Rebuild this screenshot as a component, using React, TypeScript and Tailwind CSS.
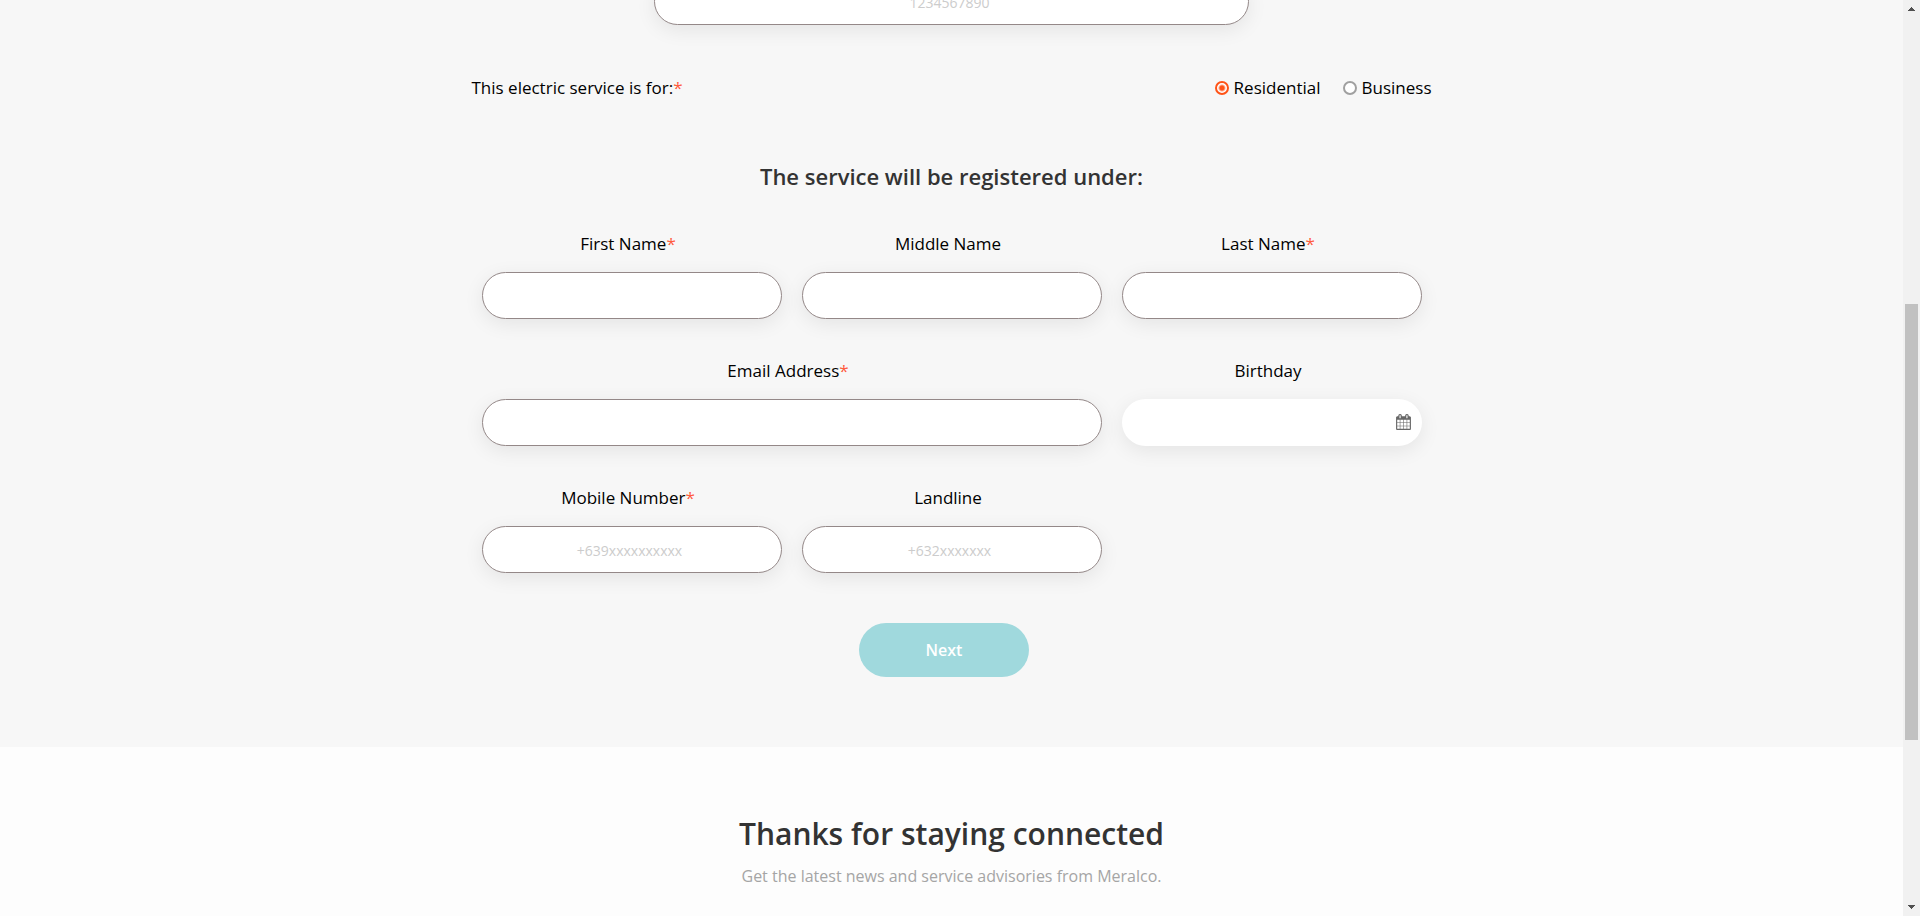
import type { ReactNode } from "react";

const inputClass =
  "h-[47px] w-full rounded-full border border-[#948888] bg-white pt-[2px] pr-6 pl-5 text-center text-[14px] text-black shadow-[0_5px_20px_rgba(0,0,0,0.08)] outline-none placeholder:text-[#cccccc]";

const labelClass = "mb-4 block pr-[7px] text-center text-[17px] leading-6";

type FieldProps = {
  id: string;
  label: string;
  type?: string;
  required?: boolean;
  placeholder?: string;
  className?: string;
};

function Required() {
  return <span className="text-[#ff5a3c]">*</span>;
}

function Field({ id, label, type = "text", required, placeholder, className = "" }: FieldProps) {
  return (
    <div className={className}>
      <label htmlFor={id} className={labelClass}>
        {label}
        {required && <Required />}
      </label>
      <input id={id} type={type} placeholder={placeholder} className={inputClass} />
    </div>
  );
}

function CalendarIcon() {
  return (
    <svg viewBox="0 0 1664 1792" className="h-4 w-[15px]" fill="currentColor" aria-hidden="true">
      <path d="M128 1664h288v-288h-288v288zm352 0h320v-288h-320v288zm-352-352h288v-320h-288v320zm352 0h320v-320h-320v320zm-352-384h288v-288h-288v288zm736 736h320v-288h-320v288zm-384-736h320v-288h-320v288zm768 736h288v-288h-288v288zm-384-352h320v-320h-320v320zm-352-864v-288q0-13-9.5-22.5t-22.5-9.5h-64q-13 0-22.5 9.5t-9.5 22.5v288q0 13 9.5 22.5t22.5 9.5h64q13 0 22.5-9.5t9.5-22.5zm736 864h288v-320h-288v320zm-384-384h320v-288h-320v288zm384 0h288v-288h-288v288zm32-480v-288q0-13-9.5-22.5t-22.5-9.5h-64q-13 0-22.5 9.5t-9.5 22.5v288q0 13 9.5 22.5t22.5 9.5h64q13 0 22.5-9.5t9.5-22.5zm384-64v1280q0 52-38 90t-90 38h-1408q-52 0-90-38t-38-90v-1280q0-52 38-90t90-38h128v-96q0-66 47-113t113-47h64q66 0 113 47t47 113v96h384v-96q0-66 47-113t113-47h64q66 0 113 47t47 113v96h128q52 0 90 38t38 90z" />
    </svg>
  );
}

function RadioOption({ value, defaultChecked, children }: { value: string; defaultChecked?: boolean; children: ReactNode }) {
  return (
    <label className="flex items-center gap-[5px]">
      <input
        type="radio"
        name="service-type"
        value={value}
        defaultChecked={defaultChecked}
        className="size-[14px] appearance-none rounded-full border-2 border-[#a0a0a0] bg-white checked:border-[#ff5317] checked:bg-[radial-gradient(circle,#ff5317_2px,white_4px)]"
      />
      {children}
    </label>
  );
}

function ScrollRail() {
  return (
    <div className="flex w-[17px] shrink-0 flex-col items-center bg-[#f1f1f1]" aria-hidden="true">
      <svg viewBox="0 0 17 17" className="size-[17px] shrink-0" fill="#505050" shapeRendering="crispEdges">
        <path d="M8 7h1v1h1v1h1v1h1v1h-7v-1h1v-1h1v-1h1z" />
      </svg>
      <div className="grow-[287]" />
      <div className="w-[13px] grow-[436] bg-[#c1c1c1]" />
      <div className="grow-[159]" />
      <svg viewBox="0 0 17 17" className="size-[17px] shrink-0" fill="#505050" shapeRendering="crispEdges">
        <path d="M5 6h7v1h-1v1h-1v1h-1v1h-1v-1h-1v-1h-1v-1h-1z" />
      </svg>
    </div>
  );
}

export default function App() {
  return (
    <div className="flex min-h-screen overflow-hidden bg-[#fdfdfd] font-['Open_Sans',sans-serif] text-black">
      <div className="min-w-0 grow">
        <main className="bg-[#f7f7f7] pb-[70px]">
          <form className="mx-auto max-w-[960px]" onSubmit={(e) => e.preventDefault()}>
            <div className="mx-auto -mt-[22px] max-w-[595px]">
              <input aria-label="Service ID number" placeholder="1234567890" className={inputClass} />
            </div>

            <fieldset className="mt-[51px] flex items-center justify-between text-[17px] leading-6">
              <span>
                This electric service is for:
                <Required />
              </span>
              <div className="flex gap-[22px]">
                <RadioOption value="residential" defaultChecked>
                  Residential
                </RadioOption>
                <RadioOption value="business">Business</RadioOption>
              </div>
            </fieldset>

            <h2 className="mt-[60px] text-center text-[22px] leading-8 font-semibold text-[#333333]">
              The service will be registered under:
            </h2>

            <div className="mt-10 grid grid-cols-3 gap-x-5 gap-y-10 px-[10px]">
              <Field id="first-name" label="First Name" required />
              <Field id="middle-name" label="Middle Name" />
              <Field id="last-name" label="Last Name" required />
              <Field id="email" label="Email Address" type="email" required className="col-span-2" />
              <div>
                <label htmlFor="birthday" className={labelClass}>
                  Birthday
                </label>
                <div className="flex h-[47px] items-center rounded-full bg-white pr-[11px] pb-[2px] shadow-[0_5px_20px_rgba(0,0,0,0.08)]">
                  <input id="birthday" type="text" className="min-w-0 grow bg-transparent pl-5 text-center text-[14px] outline-none" />
                  <button type="button" aria-label="Choose date" className="text-[#666666]">
                    <CalendarIcon />
                  </button>
                </div>
              </div>
              <Field id="mobile" label="Mobile Number" type="tel" required placeholder="+639xxxxxxxxxx" />
              <Field id="landline" label="Landline" type="tel" placeholder="+632xxxxxxx" />
            </div>

            <div className="mt-[50px] flex justify-center pr-[15px]">
              <button type="submit" className="h-[54px] w-[170px] rounded-full bg-[#a0d9dd] text-[16px] font-semibold text-white">
                Next
              </button>
            </div>
          </form>
        </main>

        <footer className="pt-[67px] text-center">
          <h2 className="text-[30px] leading-10 font-semibold text-[#333333]">Thanks for staying connected</h2>
          <p className="mt-[10px] text-[16px] leading-6 text-[#a5a5a5]">
            Get the latest news and service advisories from Meralco.
          </p>
        </footer>
      </div>
      <ScrollRail />
    </div>
  );
}
